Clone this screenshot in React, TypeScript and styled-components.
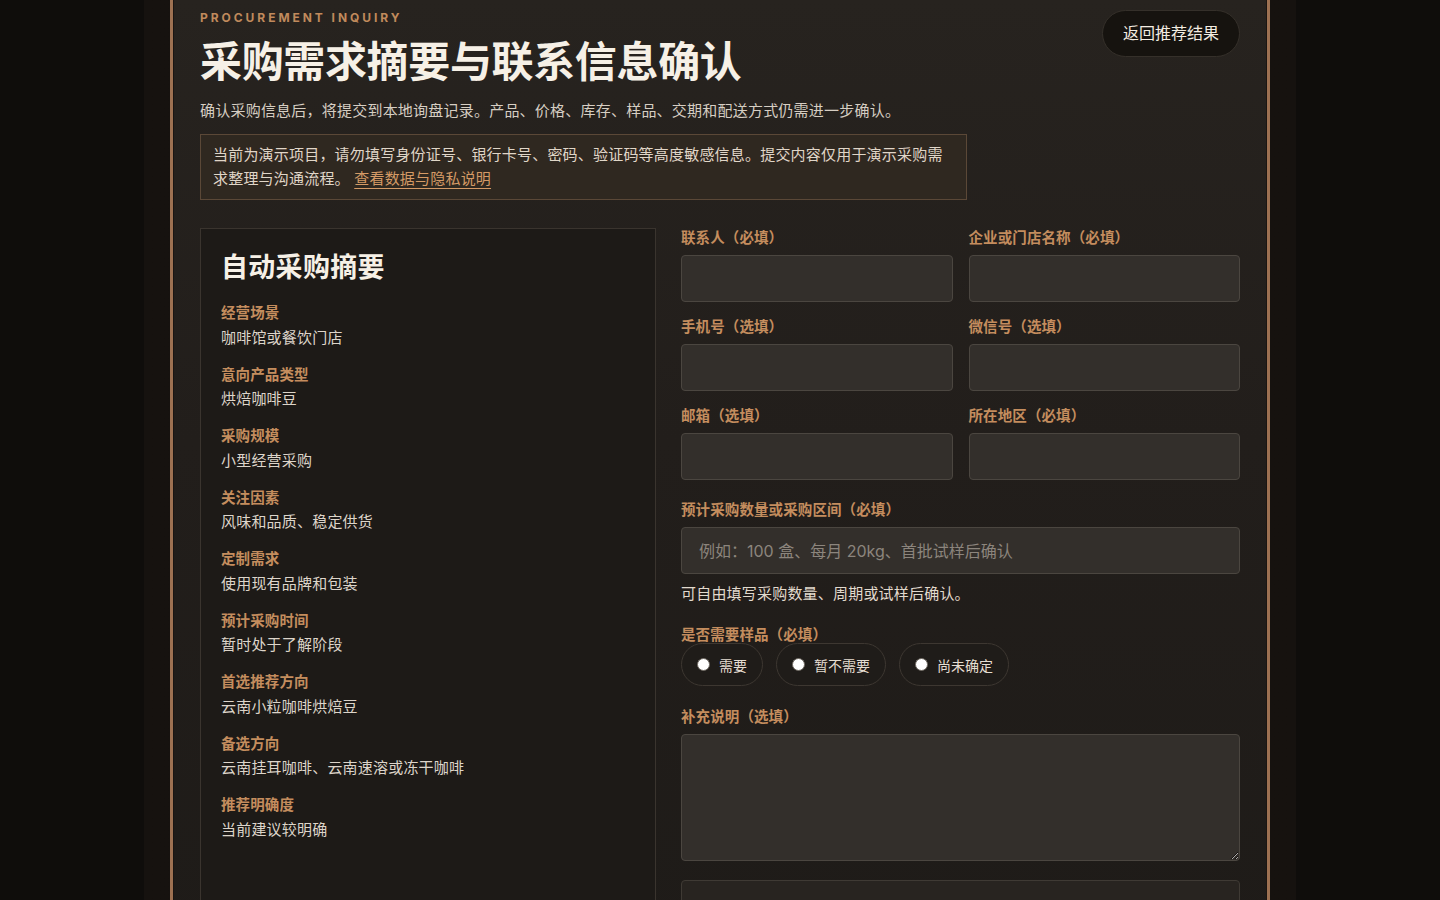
import React from 'react'
import styled, { createGlobalStyle } from 'styled-components'

const GlobalStyle = createGlobalStyle`
  html, body {
    margin: 0;
    padding: 0;
    background: #0f0d0b;
    scrollbar-width: none;
  }
  html::-webkit-scrollbar { display: none; }
  * { box-sizing: border-box; }
  body {
    font-family: Inter, "Noto Sans CJK SC", sans-serif;
    color: #ddd5ca;
  }
`

const summary = [
  { label: '经营场景', value: '咖啡馆或餐饮门店' },
  { label: '意向产品类型', value: '烘焙咖啡豆' },
  { label: '采购规模', value: '小型经营采购' },
  { label: '关注因素', value: '风味和品质、稳定供货' },
  { label: '定制需求', value: '使用现有品牌和包装' },
  { label: '预计采购时间', value: '暂时处于了解阶段' },
  { label: '首选推荐方向', value: '云南小粒咖啡烘焙豆' },
  { label: '备选方向', value: '云南挂耳咖啡、云南速溶或冻干咖啡' },
  { label: '推荐明确度', value: '当前建议较明确' },
]

const contactFields = [
  '联系人（必填）',
  '企业或门店名称（必填）',
  '手机号（选填）',
  '微信号（选填）',
  '邮箱（选填）',
  '所在地区（必填）',
]

const sampleOptions = ['需要', '暂不需要', '尚未确定']

export default function App() {
  return (
    <>
      <GlobalStyle />
      <Shell>
        <Page>
          <Header>
            <HeaderText>
              <Eyebrow>Procurement Inquiry</Eyebrow>
              <Title>采购需求摘要与联系信息确认</Title>
              <Subtitle>
                确认采购信息后，将提交到本地询盘记录。产品、价格、库存、样品、交期和配送方式仍需进一步确认。
              </Subtitle>
              <Notice>
                当前为演示项目，请勿填写身份证号、银行卡号、密码、验证码等高度敏感信息。提交内容仅用于演示采购需求整理与沟通流程。{' '}
                <NoticeLink href="#privacy">查看数据与隐私说明</NoticeLink>
              </Notice>
            </HeaderText>
            <BackButton type="button">返回推荐结果</BackButton>
          </Header>

          <Body>
            <SummaryCard>
              <CardTitle>自动采购摘要</CardTitle>
              <SummaryList>
                {summary.map((item) => (
                  <SummaryItem key={item.label}>
                    <SummaryLabel>{item.label}</SummaryLabel>
                    <SummaryValue>{item.value}</SummaryValue>
                  </SummaryItem>
                ))}
              </SummaryList>
            </SummaryCard>

            <Form onSubmit={(e) => e.preventDefault()}>
              <FieldGrid>
                {contactFields.map((label) => (
                  <Field key={label}>
                    <FieldLabel>{label}</FieldLabel>
                    <TextInput type="text" />
                  </Field>
                ))}
              </FieldGrid>

              <div>
                <Field>
                  <FieldLabel>预计采购数量或采购区间（必填）</FieldLabel>
                  <TextInput
                    type="text"
                    placeholder="例如：100 盒、每月 20kg、首批试样后确认"
                  />
                </Field>
                <Hint>可自由填写采购数量、周期或试样后确认。</Hint>
              </div>

              <RadioGroup>
                <RadioLegend>是否需要样品（必填）</RadioLegend>
                <RadioRow>
                  {sampleOptions.map((opt) => (
                    <RadioPill key={opt}>
                      <RadioDot />
                      {opt}
                    </RadioPill>
                  ))}
                </RadioRow>
              </RadioGroup>

              <Field>
                <FieldLabel>补充说明（选填）</FieldLabel>
                <TextArea />
              </Field>

              <ConsentBox />
            </Form>
          </Body>
        </Page>
      </Shell>
    </>
  )
}

const Shell = styled.div`
  width: 1152px;
  margin: 0 auto;
  padding: 0 26px;
  background: linear-gradient(90deg, #16120f 0%, #14110e 50%, #16120f 100%);
  min-height: 100vh;
`

const Page = styled.main`
  width: 1100px;
  padding: 10px 27px 40px;
  border-left: 3px solid #9d7152;
  border-right: 3px solid #9d7152;
  background: linear-gradient(180deg, #27231f 0%, #221e1b 45%, #1e1b18 100%);
  box-shadow: inset 1px 0 0 #1a1512, inset -1px 0 0 #1a1512;
`

const Header = styled.header`
  display: flex;
  justify-content: space-between;
  align-items: flex-start;
  gap: 24px;
`

const HeaderText = styled.div`
  flex: 1;
  display: flex;
  flex-direction: column;
`

const Eyebrow = styled.div`
  font-family: Inter, "Liberation Sans", sans-serif;
  font-size: 12px;
  line-height: 16px;
  font-weight: 700;
  letter-spacing: 2.95px;
  text-transform: uppercase;
  color: #c08a5c;
`

const Title = styled.h1`
  margin: 8px 0 0;
  font-family: "Noto Sans CJK SC", sans-serif;
  font-size: 42px;
  line-height: 50px;
  font-weight: 700;
  letter-spacing: -0.35px;
  color: #f6f0e6;
`

const Subtitle = styled.p`
  margin: 15px 0 0;
  font-size: 15px;
  line-height: 24px;
  letter-spacing: 0.22px;
  color: #d6cec3;
`

const Notice = styled.div`
  margin-top: 11px;
  max-width: 767px;
  padding: 8px 12px;
  font-size: 15px;
  line-height: 24px;
  letter-spacing: 0.2px;
  color: #e0d6c8;
  background: #2f2820;
  border: 1px solid #5b4837;
`

const NoticeLink = styled.a`
  color: #d49a66;
  text-decoration: underline;
  text-underline-offset: 4px;
`

const BackButton = styled.button`
  flex: none;
  height: 47px;
  padding: 0 20px 3px;
  border-radius: 999px;
  border: 1px solid #35302a;
  background: #16130f;
  color: #f3ece1;
  font-family: "Noto Sans CJK SC", sans-serif;
  font-size: 16px;
  line-height: 1;
  cursor: pointer;
`

const Body = styled.div`
  display: grid;
  grid-template-columns: 456px 1fr;
  column-gap: 25px;
  margin-top: 28px;
  align-items: stretch;
`

const SummaryCard = styled.section`
  padding: 19px 20px 40px;
  background: #1d1a17;
  border: 1px solid #3a342e;
`

const CardTitle = styled.h2`
  margin: 0;
  font-family: "Noto Sans CJK SC", sans-serif;
  font-size: 27px;
  line-height: 36px;
  font-weight: 700;
  letter-spacing: 0.3px;
  color: #f6f0e6;
`

const SummaryList = styled.dl`
  margin: 18px 0 0;
  display: flex;
  flex-direction: column;
  gap: 14px;
`

const SummaryItem = styled.div`
  display: flex;
  flex-direction: column;
`

const SummaryLabel = styled.dt`
  font-size: 14.5px;
  line-height: 21.5px;
  font-weight: 700;
  letter-spacing: 0.1px;
  color: #c48d5e;
`

const SummaryValue = styled.dd`
  margin: 2px 0 0;
  font-size: 15px;
  line-height: 24px;
  letter-spacing: 0.2px;
  color: #ddd5ca;
`

const Form = styled.form`
  display: flex;
  flex-direction: column;
  gap: 19px;
  margin-top: -1px;
`

const FieldGrid = styled.div`
  display: grid;
  grid-template-columns: 1fr 1fr;
  column-gap: 16px;
  row-gap: 14px;
`

const Field = styled.label`
  display: flex;
  flex-direction: column;
  gap: 6px;
`

const FieldLabel = styled.span`
  font-size: 14.5px;
  line-height: 22px;
  font-weight: 700;
  letter-spacing: 0.1px;
  color: #c48d5e;
`

const TextInput = styled.input`
  height: 47px;
  width: 100%;
  padding: 0 17px;
  border-radius: 4px;
  border: 1px solid #4b4640;
  background: #332f2b;
  color: #eee6da;
  font-family: Inter, "Noto Sans CJK SC", sans-serif;
  font-size: 16px;
  outline: none;

  &::placeholder {
    color: #8c857d;
  }
`

const Hint = styled.p`
  margin: 8px 0 0;
  font-size: 15px;
  line-height: 24px;
  letter-spacing: 0.2px;
  color: #e2dace;
`

const RadioGroup = styled.div`
  display: flex;
  flex-direction: column;
  margin-bottom: 1px;
`

const RadioLegend = styled.span`
  font-size: 14.5px;
  line-height: 16px;
  font-weight: 700;
  letter-spacing: 0.1px;
  color: #c48d5e;
  margin-top: 2px;
`

const RadioRow = styled.div`
  display: flex;
  gap: 13px;
`

const RadioPill = styled.label`
  display: inline-flex;
  align-items: center;
  gap: 9px;
  height: 43px;
  padding: 0 15px;
  border-radius: 999px;
  border: 1px solid #3d3731;
  background: #1f1c19;
  font-size: 14px;
  color: #e6ded2;
  cursor: pointer;
`

const RadioDot = styled.span`
  width: 13px;
  height: 13px;
  border-radius: 50%;
  background: #ffffff;
  border: 1px solid #6d6760;
`

const TextArea = styled.textarea`
  height: 127px;
  width: 100%;
  padding: 12px 17px;
  border-radius: 4px;
  border: 1px solid #4b4640;
  background: #332f2b;
  color: #eee6da;
  font-family: Inter, "Noto Sans CJK SC", sans-serif;
  font-size: 16px;
  resize: vertical;
  outline: none;
`

const ConsentBox = styled.div`
  height: 60px;
  border-radius: 4px;
  border: 1px solid #3f3a34;
  background: #282420;
`
